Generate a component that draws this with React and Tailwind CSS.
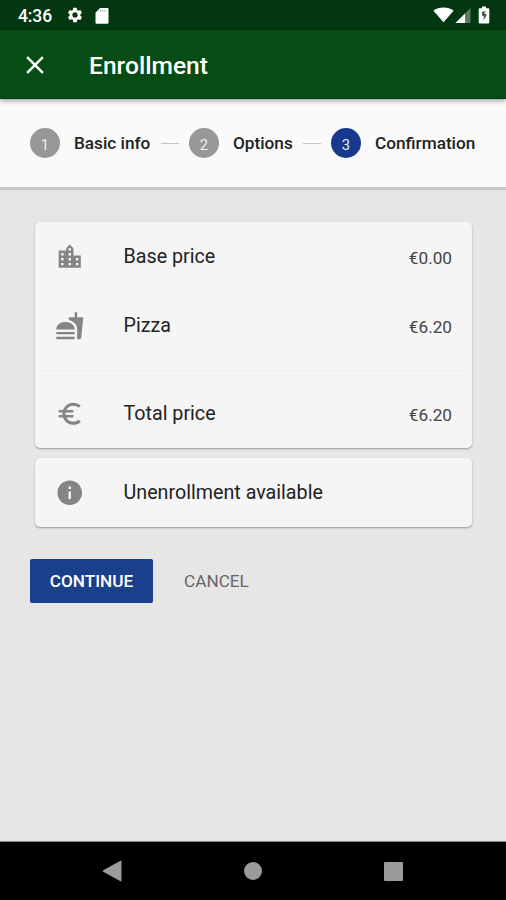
import React from 'react';
import {
  MdClose,
  MdEuroSymbol,
  MdFastfood,
  MdInfo,
  MdLocationCity,
  MdSettings,
} from 'react-icons/md';

const steps = [
  { id: 1, label: 'Basic info', labelWidth: 'w-[77px]' },
  { id: 2, label: 'Options', labelWidth: 'w-[60px]' },
  { id: 3, label: 'Confirmation', labelWidth: 'w-[102px]' },
];

const currentStep = 3;

const StatusBar = () => (
  <div className="flex h-[30px] items-center bg-[#04370f] text-white">
    <span className="ml-[18px] w-[48px] pt-[3px] text-[17.5px] font-medium leading-none tracking-[-0.1px]">4:36</span>
    <MdSettings className="h-[18px] w-[18px]" />
    <svg className="ml-[11px] mt-px h-[16px] w-[14px]" viewBox="0 0 14 16" fill="currentColor">
      <path d="M5 0h7.2c.8 0 1.3.5 1.3 1.3v13.2c0 .8-.5 1.3-1.3 1.3H1.8c-.8 0-1.3-.5-1.3-1.3V4.7z" />
      <path d="M5.6 1.8v1.8M7.8 1.8v1.8M10 1.8v1.8" stroke="#6f8a75" strokeWidth=".8" />
    </svg>
    <div className="ml-auto mr-[16px] flex items-center">
      {/* wifi */}
      <svg className="h-[16px] w-[21px]" viewBox="0 0 21 16" fill="currentColor">
        <path d="M.4 3.8C3.2 1.4 6.6.4 10.500.4s7.300 1 10.100 3.400L10.500 15.300z" />
      </svg>
      {/* mobile signal */}
      <svg className="ml-px mt-px h-[17px] w-[16px]" viewBox="0 0 16 17" fill="currentColor">
        <path d="M15.500 1v15H.5z" opacity=".35" />
        <path d="M10 6.500V16H.5z" />
      </svg>
      {/* charging battery */}
      <svg className="ml-[7px] h-[18px] w-[12px]" viewBox="0 0 12 18" fill="currentColor">
        <path d="M4 .5h4v1.700h2c.8 0 1.300.5 1.300 1.300v12.700c0 .8-.5 1.300-1.300 1.300H2c-.8 0-1.300-.5-1.300-1.300V3.500C.7 2.700 1.200 2.200 2 2.200h2z" />
        <path d="M7.800 5L4 6v3.700h2L5.300 14.200l3-4.200V7.800H6z" fill="#3a5940" />
      </svg>
    </div>
  </div>
);

const AppBar = () => (
  <header className="relative z-10 flex h-[69px] items-center border-b border-[#053b10] bg-[#074c15] text-white shadow-[0_2px_5px_rgba(0,0,0,0.35)]">
    <button className="ml-[20px] mt-px flex" aria-label="Close">
      <MdClose className="h-[30px] w-[30px]" />
    </button>
    <h1 className="ml-[39px] pt-[4px] text-[24.6px] font-medium leading-none">Enrollment</h1>
  </header>
);

const Stepper = () => (
  <div className="flex h-[91px] items-center border-b-[3px] border-[#c7c7c7] bg-[#fafafa] pl-[30px]">
    {steps.map((step, index) => (
      <React.Fragment key={step.id}>
        {index > 0 && <div className="mx-[10px] h-px w-[18px] bg-[#c4c4c4]" />}
        <div
          className={`flex h-[30px] w-[30px] shrink-0 items-center justify-center rounded-full pt-[4px] text-[14.8px] leading-none text-[#f0f0f0] ${
            step.id === currentStep ? 'bg-[#173a8d]' : 'bg-[#979797]'
          }`}
        >
          {step.id}
        </div>
        <span
          className={`ml-[14px] whitespace-nowrap pt-[2px] text-[17.2px] font-medium leading-none text-[#222] ${step.labelWidth}`}
        >
          {step.label}
        </span>
      </React.Fragment>
    ))}
  </div>
);

const Row = ({ icon: Icon, label, price }) => (
  <div className="flex h-[69px] items-center pl-[20px] pr-[20px]">
    <Icon className="h-[29.5px] w-[29.5px] shrink-0 text-[#858585]" />
    <span className="ml-[39px] pt-px text-[19.7px] leading-none text-[#222]">{label}</span>
    {price && <span className="ml-auto pt-[4px] text-[17.2px] leading-none text-[#444]">{price}</span>}
  </div>
);

const Card = ({ children }) => (
  <section className="rounded-[5px] bg-[#f5f5f5] shadow-[0_1px_2px_rgba(0,0,0,0.35)]">{children}</section>
);

const NavigationBar = () => (
  <nav className="flex h-[59px] items-center border-t border-[#8a8a8a] bg-black pl-[102px] text-[#9b9b9b]">
    <svg className="h-[22px] w-[20px]" viewBox="0 0 20 22" fill="currentColor">
      <path d="M1.2 10.300L18.500.7c.5-.3 1 0 1 .5v19.600c0 .5-.5.8-1 .5L1.200 11.700c-.5-.4-.5-1 0-1.400z" />
    </svg>
    <div className="ml-[122px] h-[18px] w-[18px] rounded-full bg-[#9b9b9b]" />
    <div className="ml-[122px] h-[19px] w-[19px] rounded-[1px] bg-[#9b9b9b]" />
  </nav>
);

const App = () => {
  return (
    <div className="flex h-[900px] w-[506px] flex-col overflow-hidden bg-[#e6e6e6] font-['Roboto',sans-serif]">
      <StatusBar />
      <AppBar />
      <Stepper />

      <main className="flex-1 pt-[32px]">
        <div className="ml-[35px] mr-[34px] flex flex-col gap-[10px]">
          <Card>
            <Row icon={MdLocationCity} label="Base price" price="€0.00" />
            <Row icon={MdFastfood} label="Pizza" price="€6.20" />
            <div className="mx-[6px] mb-[8px] mt-[10px] h-px bg-[#ededed]" />
            <Row icon={MdEuroSymbol} label="Total price" price="€6.20" />
          </Card>
          <Card>
            <Row icon={MdInfo} label="Unenrollment available" />
          </Card>
        </div>

        {/* Step actions */}
        <div className="ml-[30px] mt-[32px] flex items-center">
          <button className="h-[44px] w-[123px] rounded-[2px] bg-[#1b408b] pt-[2px] text-[17.2px] font-medium leading-none text-white">
            CONTINUE
          </button>
          <button className="ml-[31px] pt-[2px] text-[17.2px] leading-none text-[#666]">CANCEL</button>
        </div>
      </main>

      <NavigationBar />
    </div>
  );
};

export default App;
